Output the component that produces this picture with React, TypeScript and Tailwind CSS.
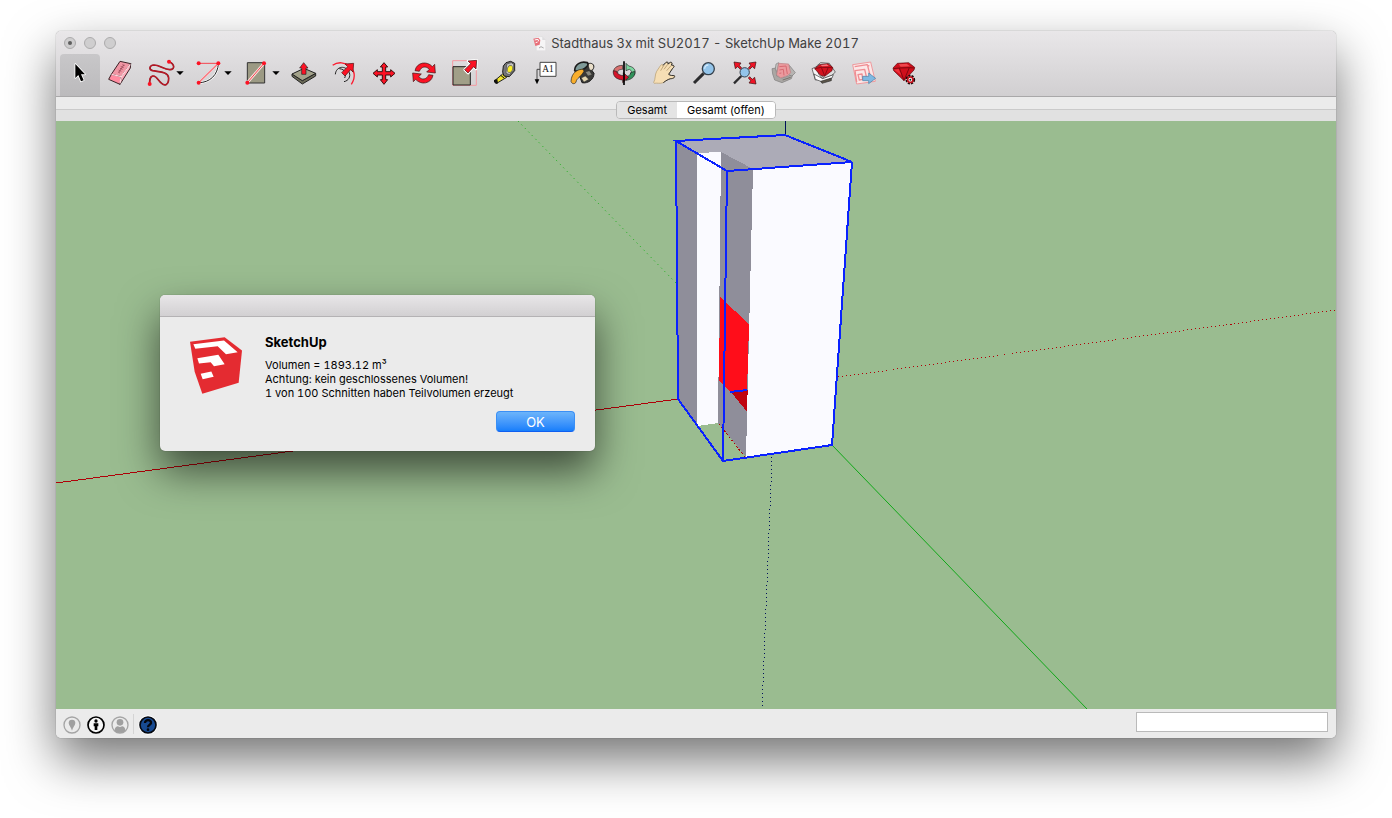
import type { ReactNode } from "react";

const RED_ARROW = "M36 0 L34 26 L27 19 L10 38 L0 28 L18 10 L10 2 Z";

function Caret() {
  return <path d="M109 52 H131 L120 63 Z" fill="#000" />;
}

function Tool({
  label,
  wide,
  active,
  children,
}: {
  label: string;
  wide?: boolean;
  active?: boolean;
  children: ReactNode;
}) {
  return (
    <button
      type="button"
      aria-label={label}
      className={`h-[42px] shrink-0 ${wide ? "w-12" : "w-10"} ${
        active ? "rounded-t bg-linear-to-b from-[#c8c7c9] to-[#bbbabc]" : ""
      }`}
    >
      <svg
        viewBox={wide ? "0 0 144 126" : "0 0 120 126"}
        className="block h-full w-full"
        strokeLinejoin="round"
      >
        {children}
      </svg>
    </button>
  );
}

function Toolbar() {
  return (
    <div className="flex overflow-hidden px-1">
      <Tool label="Auswählen" active>
        <path
          d="M46 30 V72 L55 63 L63 82 L71 79 L63 61 H75 Z"
          fill="#000"
          stroke="#fff"
          strokeWidth="5"
          paintOrder="stroke"
        />
      </Tool>
      <Tool label="Radiergummi">
        <g stroke="#3b2226" strokeWidth="3">
          <path d="M60 22 L92 29 L64 68 L34 61 Z" fill="#f096a4" />
          <path d="M34 61 L64 68 L60 91 L26 76 Z" fill="#ff8ba0" />
          <path d="M92 29 L91 42 L60 91 L64 68 Z" fill="#ffa9b9" />
        </g>
        <path d="M35 61 L64 68 L91 31 M64 68 L60 88" fill="none" stroke="#ffd5dc" strokeWidth="4" />
        <path
          d="M54 54 l6 3 M56 48 l8 4 M60 43 l8 3 M62 37 l9 4 M67 32 l7 3 M57 54 L72 32"
          stroke="#8c3c4c"
          strokeWidth="2"
        />
      </Tool>
      <Tool label="Freihand" wide>
        <path
          d="M87 23 C104 30 106 46 90 47 C74 48 58 33 42 33 C27 34 26 47 38 50 C56 54 84 52 86 72 C86 94 74 96 65 88 C54 80 50 64 38 66 C29 68 29 78 29 90"
          fill="none"
          stroke="#8f1720"
          strokeWidth="5"
        />
        <path
          d="M87 23 C104 30 106 46 90 47 C74 48 58 33 42 33 C27 34 26 47 38 50 C56 54 84 52 86 72 C86 94 74 96 65 88 C54 80 50 64 38 66 C29 68 29 78 29 90"
          fill="none"
          stroke="#e0182a"
          strokeWidth="2"
        />
        <circle cx="87" cy="23" r="6" fill="#fc1224" />
        <circle cx="29" cy="90" r="6" fill="#fc1224" />
        <Caret />
      </Tool>
      <Tool label="Bogen" wide>
        <path d="M91 28 C90 62 66 86 32 86" fill="none" stroke="#fff" strokeWidth="7" />
        <path d="M91 28 C90 62 66 86 32 86" fill="none" stroke="#222" strokeWidth="3" />
        <path d="M91 28 L32 86" stroke="#ffc5c8" strokeWidth="6" />
        <path d="M32 28 H91 L32 86" fill="none" stroke="#f5444f" strokeWidth="3" />
        <circle cx="32" cy="28" r="6" fill="#fc1224" />
        <circle cx="91" cy="28" r="6" fill="#fc1224" />
        <circle cx="32" cy="86" r="6" fill="#fc1224" />
        <Caret />
      </Tool>
      <Tool label="Rechteck" wide>
        <rect x="34" y="26" width="52" height="61" fill="#9c9a84" stroke="#333" strokeWidth="3" />
        <path d="M34 86 L84 28" stroke="#ffe3e0" strokeWidth="8" />
        <path d="M34 86 L84 28" stroke="#f2434d" strokeWidth="3" />
        <circle cx="34" cy="86" r="6" fill="#fc1224" />
        <circle cx="84" cy="28" r="6" fill="#fc1224" />
        <Caret />
      </Tool>
      <Tool label="Drücken/Ziehen">
        <g stroke="#222" strokeWidth="3">
          <path d="M24 60 V67 L55 90 L95 66 V58 L55 80 Z" fill="#6c6b58" />
          <path d="M24 60 L60 43 L95 58 L55 80 Z" fill="#a3a28a" />
          <path d="M59 26 L72 42 H66 V61 H53 V42 H47 Z" fill="#fc1224" strokeWidth="2" />
        </g>
      </Tool>
      <Tool label="Versatz">
        <path d="M26 34 C58 10 112 46 82 91" fill="none" stroke="#fc1c30" strokeWidth="4" />
        <path
          d="M34 61 C36 36 66 32 76 56 C80 68 74 80 60 83 M46 44 C64 46 68 58 62 72"
          fill="none"
          stroke="#222"
          strokeWidth="3"
        />
        <path d={RED_ARROW} transform="translate(53 28)" fill="#fc1224" stroke="#4a1010" strokeWidth="2" />
      </Tool>
      <Tool label="Verschieben">
        <path
          d="M60 26 L71 39 H65 V53 H80 V47 L93 58 L80 69 V63 H65 V77 H71 L60 91 L49 77 H55 V63 H40 V69 L27 58 L40 47 V53 H55 V39 H49 Z"
          fill="#fc1224"
          stroke="#3a1010"
          strokeWidth="3"
        />
      </Tool>
      <Tool label="Drehen">
        <g fill="#fc1224" stroke="#3a1010" strokeWidth="2">
          <path d="M33 50 C38 24 70 20 85 38 L92 31 L94 57 L68 54 L76 46 C66 35 52 37 46 52 Z" />
          <path
            d="M33 50 C38 24 70 20 85 38 L92 31 L94 57 L68 54 L76 46 C66 35 52 37 46 52 Z"
            transform="rotate(180 60 57)"
          />
        </g>
      </Tool>
      <Tool label="Skalieren">
        <rect x="26" y="20" width="71" height="74" fill="none" stroke="#f39aa2" strokeWidth="3" />
        <rect x="27" y="38" width="52" height="55" fill="#a19f88" stroke="#222" strokeWidth="3" />
        <path d={RED_ARROW} transform="translate(62 19)" fill="#fff" stroke="#fff" strokeWidth="8" />
        <path d={RED_ARROW} transform="translate(62 19)" fill="#fc1224" stroke="#3a1010" strokeWidth="2" />
      </Tool>
      <Tool label="Maßband">
        <path d="M56 60 L68 70 L38 88 L33 79 Z" fill="#f2e52a" stroke="#222" strokeWidth="3" />
        <path d="M30 78 L40 75 L42 88 L36 90 L30 84 Z" fill="#111" />
        <path d="M50 64 L60 72" stroke="#111" strokeWidth="3" />
        <path d="M58 36 L66 26 L80 22 L92 28 V50 L76 68 L60 66 L56 54 Z" fill="#77777b" stroke="#1c1c1c" strokeWidth="3" />
        <path d="M68 30 L82 26 L89 31 V48 L76 62 L66 58 Z" fill="#c2c2c2" stroke="#444" strokeWidth="2" />
        <ellipse cx="78" cy="45" rx="8" ry="11" transform="rotate(20 78 45)" fill="#fbef27" stroke="#555" strokeWidth="2" />
      </Tool>
      <Tool label="Text">
        <path d="M48 46 H39 V78" fill="none" stroke="#444" strokeWidth="3" />
        <path d="M32 76 H46 L39 91 Z" fill="#000" />
        <rect x="48" y="25" width="48" height="42" fill="#fff" stroke="#444" strokeWidth="3" />
        <text x="72" y="55" textAnchor="middle" fontSize="28" fill="#111" fontFamily="Liberation Serif, serif">
          A1
        </text>
      </Tool>
      <Tool label="Farbeimer">
        <g stroke="#1c1c1c">
          <path d="M46 64 L70 30 L90 58 C90 76 72 90 54 86 Z" fill="#3a3a38" strokeWidth="3" />
          <path d="M64 54 L76 50 L84 62 L72 66 Z" fill="#8b8a80" strokeWidth="1" />
          <path d="M52 72 L64 66 L74 76 L60 84 Z" fill="#e2d5b0" strokeWidth="1" />
          <path d="M72 30 C82 24 94 32 88 44 C86 50 80 50 78 48" fill="#eadfca" strokeWidth="3" />
          <path d="M32 50 C32 32 50 20 70 26 C76 32 68 42 54 48 C44 52 36 52 32 50 Z" fill="#7f9b99" strokeWidth="5" />
          <path d="M58 46 C42 44 22 56 21 82 C24 92 34 90 36 84 C38 72 50 70 60 52 Z" fill="#f9ae2c" strokeWidth="2" />
        </g>
      </Tool>
      <Tool label="Rotieren">
        <g stroke="#222" strokeWidth="2">
          <path d="M56 34 C38 34 26 44 30 56 L42 58 C38 50 46 46 56 46 Z" fill="#d9706f" />
          <path d="M66 28 V50 L76 46 C84 50 84 56 78 60 L92 62 C98 46 86 38 74 36 Z" fill="#7dd6a0" />
          <path d="M92 52 C94 68 84 76 66 79 V68 C76 66 80 62 80 56 Z" fill="#2f9058" />
          <path d="M28 50 C26 66 36 76 56 78 V86 L74 70 L58 56 V65 C46 64 38 58 38 52 Z" fill="#d5142a" />
        </g>
        <path d="M60 22 V93" stroke="#000" strokeWidth="5" />
      </Tool>
      <Tool label="Schwenken">
        <path
          d="M29 85 C35 76 32 62 38 52 L50 34 C55 29 60 32 57 38 L65 26 C70 22 74 25 72 30 L79 25 C84 24 86 28 82 33 L88 34 C92 36 90 40 86 43 L74 61 C80 65 85 64 91 65 C94 70 88 74 80 74 C72 76 66 80 58 86 C48 90 38 86 31 88 Z"
          fill="#f6deb4"
          stroke="#b49a6c"
          strokeWidth="2"
        />
        <path d="M72 30 L60 46 M82 34 L68 50 M57 38 L50 50" stroke="#a58a5c" strokeWidth="2" />
        <path
          d="M57 34 L65 26 C70 22 74 25 72 30 L79 25 C84 24 86 28 82 33 L88 34 C92 36 90 40 86 43 L74 61 C80 66 86 64 91 65 C94 70 88 74 80 74 C72 76 66 80 58 86"
          fill="none"
          stroke="#333"
          strokeWidth="3"
        />
      </Tool>
      <Tool label="Zoom">
        <path d="M59 58 L30 87" stroke="#2c2c2e" strokeWidth="9" />
        <circle cx="73" cy="44" r="18" fill="#93c4ea" stroke="#37424d" strokeWidth="4" />
        <path d="M62 44 A11 11 0 0 1 73 33" fill="none" stroke="#d3eafb" strokeWidth="4" />
      </Tool>
      <Tool label="Modell zentrieren">
        <path d="M52 66 L30 88" stroke="#2c2c2e" strokeWidth="7" />
        <circle cx="62" cy="55" r="14" fill="#93c4ea" stroke="#37424d" strokeWidth="3" />
        <g fill="#f01426" stroke="#3a1010" strokeWidth="2">
          <path d="M96 24 L92 44 L85 38 L77 46 L73 42 L80 34 L75 27 Z" />
          <path d="M30 24 L34 44 L41 38 L49 46 L53 42 L46 34 L51 27 Z" />
          <path d="M96 90 L92 70 L85 76 L77 68 L73 72 L80 80 L75 87 Z" />
        </g>
      </Tool>
      <Tool label="3D Warehouse">
        <g stroke="#7d7b7b" strokeWidth="2">
          <path d="M24 44 L36 42 L38 66 L54 72 L86 62 L82 74 L54 86 L32 78 L26 60 Z" fill="#aaa7a4" />
          <path d="M76 34 L94 56 L84 66 L72 62 Z" fill="#b6b4b2" />
          <path d="M36 30 L44 26 L40 56 L34 44 Z" fill="#c4c2c0" />
          <path d="M44 28 L74 30 L80 56 L72 64 L50 72 L38 62 Z" fill="#ea9a9e" stroke="#b98083" />
        </g>
        <path d="M46 38 L66 36 L70 60 M46 48 L58 46 L60 64 M46 58 L52 57" fill="none" stroke="#d76a72" strokeWidth="3" />
        <path d="M56 78 L80 70" stroke="#77726c" strokeWidth="3" />
      </Tool>
      <Tool label="Extension Warehouse">
        <g stroke="#333" strokeWidth="2">
          <path d="M24 44 L38 38 L44 60 L56 74 L34 78 Z" fill="#f5f5f5" />
          <path d="M38 36 L50 26 L76 28 L94 54 L84 64 L60 74 Z" fill="#dedede" />
          <path d="M30 60 L56 74 L88 62 L84 72 L56 84 L34 76 Z" fill="#fff" />
          <path d="M50 82 L82 72 V80 L54 88 Z" fill="#5b5449" />
          <path d="M32 44 L46 32 L72 29 L86 40 L84 50 L62 67 L50 64 Z" fill="#d3121e" stroke="#5a0a10" />
        </g>
        <path d="M32 44 L52 40 L86 41 M52 40 L62 66 L72 42" fill="none" stroke="#8c0a14" strokeWidth="3" />
        <path d="M50 34 L68 31 L74 36 L54 37 Z" fill="#f4767c" />
      </Tool>
      <Tool label="An LayOut senden">
        <path d="M26 32 L80 24 L94 82 L38 90 Z" fill="#fbe7e7" stroke="#ef9a9e" strokeWidth="3" />
        <path
          d="M32 38 L70 32 L80 70 M38 84 L33 50 L62 46 L68 72 M42 62 L54 60 L56 76 L46 78 Z M66 32 L76 36"
          fill="none"
          stroke="#ef8d92"
          strokeWidth="4"
        />
        <path d="M56 67 H74 V57 L95 73 L74 89 V80 H56 Z" fill="#7fb9e2" stroke="#4a7fa5" strokeWidth="2" />
      </Tool>
      <Tool label="Erweiterungsmanager">
        <path d="M27 42 L40 28 L74 26 L92 40 L90 48 L60 80 L29 50 Z" fill="#cf0f1c" stroke="#5a0a10" strokeWidth="2" />
        <path d="M28 44 L46 42 L76 41 L92 42 M46 42 L60 79 L76 41" fill="none" stroke="#81070f" strokeWidth="3" />
        <path d="M44 31 L68 29 L78 37 L50 38 Z" fill="#f0474e" />
        <path d="M30 47 L44 45 L52 64 Z" fill="#f0303a" />
        <circle cx="79" cy="77" r="11" fill="none" stroke="#1e0a0a" strokeWidth="7" strokeDasharray="6 3" />
        <circle cx="79" cy="77" r="8" fill="#fff" stroke="#c40f1b" strokeWidth="5" />
        <circle cx="79" cy="77" r="3" fill="#222" />
      </Tool>
    </div>
  );
}

function TitleBar() {
  return (
    <div className="grid h-[23px] grid-cols-[1fr_auto_1fr] items-center px-2">
      <div className="flex gap-2">
        <button
          type="button"
          aria-label="Schließen"
          className="flex size-3 items-center justify-center rounded-full border border-[#acabac] bg-[#cfcecf]"
        >
          <span className="size-1 rounded-full bg-[#5e5e5e]" />
        </button>
        <button type="button" aria-label="Minimieren" className="size-3 rounded-full border border-[#acabac] bg-[#cfcecf]" />
        <button type="button" aria-label="Zoomen" className="size-3 rounded-full border border-[#acabac] bg-[#cfcecf]" />
      </div>
      <h1 className="flex items-center gap-1 pt-px text-[13px] leading-4 whitespace-nowrap text-[#404040] tabular-nums">
        <svg viewBox="0 0 42 45" className="h-[15px] w-[14px]">
          <path d="M10 2 H28 L38 12 V44 H10 Z" fill="#f6f5f6" stroke="#d2d0d2" strokeWidth="1" />
          <path d="M28 2 V12 H38" fill="#dedddf" />
          <path d="M1 8 L16 5 L22 12 L20 26 L7 30 Z" fill="#e8707a" />
          <path d="M5 12 L15 10 L17 16 M8 20 L14 18" fill="none" stroke="#fff" strokeWidth="3" />
          <path d="M18 36 L24 32 L32 36" fill="none" stroke="#aaa" strokeWidth="3" />
        </svg>
        Stadthaus 3x mit SU2017 - SketchUp Make 2017
      </h1>
    </div>
  );
}

function SceneTabs() {
  return (
    <div className="flex h-6 shrink-0 items-center justify-center bg-[linear-gradient(#ebebeb_12px,#cacaca_12px,#cacaca_13px,#e1e1e1_13px)] pt-[2px]">
      <div role="tablist" className="flex h-[18px] overflow-hidden rounded border border-[#b9b9b9] text-[11px] leading-4 text-black">
        <button type="button" role="tab" aria-selected="false" className="bg-[#e4e4e4] px-[10px]">
          Gesamt
        </button>
        <button type="button" role="tab" aria-selected="true" className="bg-white px-[10px]">
          Gesamt (offen)
        </button>
      </div>
    </div>
  );
}

function Viewport() {
  return (
    <svg
      viewBox="0 0 1280 588"
      preserveAspectRatio="xMidYMid slice"
      shapeRendering="crispEdges"
      className="absolute inset-0 h-full w-full"
    >
      {/* axes */}
      <path d="M0 362 L622 278" stroke="#b00008" />
      <path d="M782 256 L1280 189" stroke="#b00008" strokeDasharray="1 3" />
      <path d="M776 324 L1031 588" stroke="#10a818" shapeRendering="geometricPrecision" />
      <path d="M462 0 L620 162" stroke="#10b010" strokeDasharray="1 4" shapeRendering="geometricPrecision" />
      <path d="M729.5 0 V14" stroke="#00105c" />
      <path d="M716 336 L706 588" stroke="#00105c" strokeDasharray="1 3" />

      {/* faces */}
      <path d="M620 20 L729 14 L796 41 L696 48 L665 31 L641 32 Z" fill="#acabb7" />
      <path d="M620 20 L641 32 V304 L622 278 Z" fill="#8f8e9a" />
      <path d="M641 32 L665 31 L662 302 L641 305 Z" fill="#fafaff" />
      <path d="M665 31 L697 48 L690 336 L662 302 Z" fill="#8f8e9a" />
      <path d="M664 176 L693 203 L691 270 L674 271 L663 260 Z" fill="#ff0d1a" />
      <path d="M675 271 L692 269 V292 Z" fill="#bf0410" />
      <path d="M674 271 L691 269" stroke="#0a22ff" strokeWidth="2" />
      <path d="M697 48 L796 42 L776 324 L690 336 Z" fill="#fafaff" />
      <path d="M663 303 L689 336" stroke="#b00008" strokeDasharray="2 2" />

      {/* selection box */}
      <g fill="none" stroke="#0a22ff" strokeWidth="2">
        <path d="M620 20 L729 14 L796 41 L671 50 Z" />
        <path d="M620 20 L622 278 L667 340 L776 324 L796 41" />
        <path d="M671 50 L667 340" />
      </g>
    </svg>
  );
}

function VolumeDialog() {
  return (
    <div
      role="dialog"
      aria-labelledby="dialog-title"
      className="absolute top-[174px] left-[104px] w-[435px] rounded-[5px] bg-[#ebebeb] text-black shadow-[0_0_1px_rgba(0,0,0,0.5),0_20px_42px_rgba(0,0,0,0.6)]"
    >
      <div className="h-[22px] rounded-t-[5px] border-b border-[#b4b2b4] bg-linear-to-b from-[#e8e6e8] to-[#d2d0d2]" />
      <div className="flex gap-[23px] pt-[17px] pl-[30px]">
        <svg viewBox="0 0 156 170" className="mt-[3px] h-[57px] w-[52px]">
          <path d="M0 14 L104 0 L156 40 L146 137 L37 170 L14 104 Z" fill="#e42b31" />
          <path
            d="M10 21 L102 10 L143 45 L108 51 L83 27 L16 35 Z M22 63 L85 53 L104 81 L72 87 L62 75 L27 79 Z M32 110 L64 103 L71 119 L38 126 Z"
            fill="#fff"
          />
        </svg>
        <div>
          <h2 id="dialog-title" className="text-[13px] leading-4 font-bold">
            SketchUp
          </h2>
          <p className="mt-2 text-[11px] leading-[14px] whitespace-nowrap tabular-nums">
            Volumen = 1893.12 m³
            <br />
            Achtung: kein geschlossenes Volumen!
            <br />1 von 100 Schnitten haben Teilvolumen erzeugt
          </p>
        </div>
      </div>
      <div className="flex justify-end px-5 pt-[11px] pb-[19px]">
        <button
          type="button"
          className="h-[21px] w-[79px] rounded border border-[#3a8ff5] border-b-[#0f5ff0] bg-linear-to-b from-[#6cb4fa] to-[#157efb] text-[13px] leading-4 text-white"
        >
          OK
        </button>
      </div>
    </div>
  );
}

function StatusBar() {
  return (
    <div className="flex h-[29px] shrink-0 items-center bg-[#ebebeb] pr-2 pl-[7px]">
      <div className="flex items-center gap-[6px] pt-[3px]">
        <button type="button" aria-label="Geo-Position">
          <svg viewBox="0 0 54 54" className="block size-[18px]">
            <circle cx="27" cy="27" r="24" fill="none" stroke="#a5a5a5" strokeWidth="4" />
            <path d="M27 44 C25 34 17 28 17 21 A10 10 0 0 1 37 21 C37 28 29 34 27 44 Z" fill="#a0a0a0" />
          </svg>
        </button>
        <button type="button" aria-label="Autor">
          <svg viewBox="0 0 54 54" className="block size-[18px]">
            <circle cx="27" cy="27" r="24" fill="#f6f6f6" stroke="#000" strokeWidth="5" />
            <circle cx="27" cy="15" r="5" fill="#000" />
            <path d="M20 22 H34 V31 H31 V42 H23 V31 H20 Z" fill="#000" />
          </svg>
        </button>
        <button type="button" aria-label="Anmelden">
          <svg viewBox="0 0 54 54" className="block size-[18px]">
            <circle cx="27" cy="27" r="24" fill="none" stroke="#a5a5a5" strokeWidth="4" />
            <circle cx="27" cy="19" r="10" fill="#a0a0a0" />
            <path d="M11 44 C11 34 17 31 21 31 C25 34 29 34 33 31 C37 31 43 34 43 44 C34 52 20 52 11 44 Z" fill="#a0a0a0" />
          </svg>
        </button>
      </div>
      <span className="mx-1 h-5 w-px bg-[#d4d4d4]" />
      <button type="button" aria-label="Hilfe" className="pt-[3px]">
        <svg viewBox="0 0 60 60" className="block size-5">
          <circle cx="30" cy="30" r="29" fill="#fff" />
          <circle cx="30" cy="30" r="24" fill="#174a91" stroke="#05080f" strokeWidth="5" />
          <path d="M21 24 C21 12 40 13 39 24 C38 30 30 30 30 37" fill="none" stroke="#05080f" strokeWidth="7" />
          <circle cx="30" cy="44" r="4" fill="#05080f" />
        </svg>
      </button>
      <input
        type="text"
        aria-label="Maße"
        className="mb-[3px] ml-auto h-5 w-48 border border-[#bababa] bg-white px-1 text-[11px] outline-none"
      />
    </div>
  );
}

export default function App() {
  return (
    <main className="flex h-screen min-h-[480px] flex-col bg-white px-14 pt-[31px] pb-20 font-['Inter',sans-serif]">
      <section className="flex flex-1 flex-col overflow-hidden rounded-[5px] shadow-[0_0_1px_rgba(0,0,0,0.6),0_22px_50px_rgba(0,0,0,0.55)]">
        <header className="shrink-0 border-b border-[#a9a8a9] bg-linear-to-b from-[#e9e7e9] to-[#d1cfd1]">
          <TitleBar />
          <Toolbar />
        </header>
        <SceneTabs />
        <div className="relative flex-1 overflow-hidden bg-[#9abc90]">
          <Viewport />
          <VolumeDialog />
        </div>
        <StatusBar />
      </section>
    </main>
  );
}
